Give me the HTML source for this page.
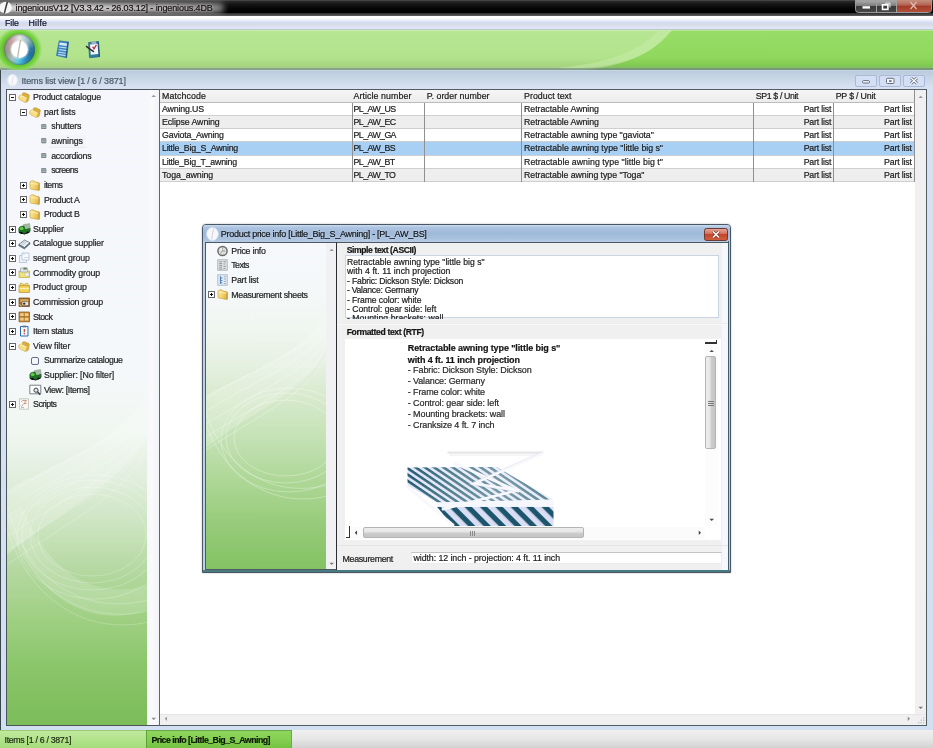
<!DOCTYPE html>
<html lang="en">
<head>
<meta charset="utf-8">
<title>ingeniousV12</title>
<style>
*{box-sizing:border-box;margin:0;padding:0}
html,body{width:933px;height:748px;overflow:hidden;background:#fff}
body{font-family:"Liberation Sans",sans-serif;font-size:9px;color:#1c1c1c;position:relative}
.abs{position:absolute}
.t{position:absolute;white-space:pre;line-height:12px;height:12px;color:#1c1c1c;-webkit-text-stroke:.2px currentColor;filter:blur(.25px)}
#titlebar{left:0;top:0;width:933px;height:16px;background:linear-gradient(#5a5a5a 0,#2c2c2c 1px,#161616 4px,#040404 9px,#000 13px,#3c3c3c 13.6px,#4a4a4a 15.4px,#9a9a9a 16px);overflow:hidden}
#titleglow{left:-14px;top:3px;width:238px;height:10px;border-radius:5px;background:linear-gradient(90deg,#f0f0f0 0,#dcdcdc 45%,#b4b4b4 78%,#888 100%);filter:blur(3.2px)}
#menubar{left:0;top:16px;width:933px;height:14px;background:linear-gradient(#ffffff 0,#fcfdfc 2px,#e8eef8 4.5px,#d2dcf4 6.5px,#d8dde2 9px,#e0e4fb 11.5px,#dfe3f6 12.6px,#b9c9c2 13.4px,#c4dcbc 14px)}
#toolbar{left:0;top:30px;width:933px;height:40px;overflow:hidden}
#mdi{left:0;top:70px;width:933px;height:660px;background:linear-gradient(#c8dce2 0,#bccbde 1.5px,#c6d6e5 8px,#d8e1f1 17px,#d6e2f3 20px,#d0e0f2 100%);border-left:1px solid #3c444c}
#tree{left:6px;top:89px;width:154px;height:637px;border:1px solid #4e545c;border-right:none;background:linear-gradient(#f5f7fc 0,#f5f8fa 45%,#f0f6f0 54%,#e0eedc 61.5%,#cce4c0 68.6%,#b4d8a0 75.8%,#a0d084 82.9%,#8cc66c 90.1%,#80be5e 97.2%,#7cbc5a 100%);overflow:hidden}
#treesb{left:147px;top:90px;width:12px;height:635px;background:linear-gradient(90deg,#f6f7fb 0,#fafafc 40%,#f3f4f8 100%)}
.pm{position:absolute;width:7px;height:7px;border:1px solid #686868;background:#fff}
.pm:before{content:"";position:absolute;left:1px;top:2px;width:3px;height:1px;background:#111}
.pm.p:after{content:"";position:absolute;left:2px;top:1px;width:1px;height:3px;background:#111}
.ic{position:absolute;width:12px;height:11px}
#grid{left:159px;top:89px;width:768px;height:637px;border:1px solid #555b63;border-left:1.5px solid #62666c;background:#fff;overflow:hidden}
.gh{position:absolute;top:0;height:13px;background:linear-gradient(#f6f6f6,#ececec);border-right:1px solid #8e8e8e;border-bottom:1px solid #bcbcbc}
.gr{position:absolute;left:0;width:755px;height:13.15px;border-bottom:1px solid #cfcfcf}
.gv{position:absolute;top:13px;width:1px;height:79px;background:#909090}
#statusbar{left:0;top:730px;width:933px;height:18px;background:linear-gradient(#f0f0f0 0,#e6e6e6 50%,#d2d2d2 100%)}
#dlg{left:202px;top:224.3px;width:529px;height:348.7px;border:1px solid #4a5866;border-radius:4px 4px 0 0;background:#b9cfe8;box-shadow:0 0 2px rgba(0,0,0,.3)}
</style>
</head>
<body>
<svg width="0" height="0" style="position:absolute"><defs><linearGradient id="fgrad" x1="0" y1="0" x2="1" y2=".4"><stop offset="0" stop-color="#faeaa6"/><stop offset=".55" stop-color="#f2d574"/><stop offset="1" stop-color="#e2b848"/></linearGradient></defs></svg>

<div id="titlebar" class="abs"></div><div id="titleglow" class="abs"></div>
<svg class="abs" style="left:0;top:0" width="16" height="15" viewBox="0 0 16 15"><ellipse cx="5.6" cy="7.7" rx="6.3" ry="5.9" fill="#f6f6f6"/><path d="M6.6 1.6L8.1 2L5 13.6L3.6 13.2Z" fill="#3a3a3a"/></svg>
<div class="t" style="left:15.5px;top:1.5px;font-size:9px;letter-spacing:-0.11px;color:#141414;text-shadow:0 0 3px rgba(255,255,255,.9),0 0 1px rgba(120,40,40,.5);">ingeniousV12 [V3.3.42 - 26.03.12] - ingenious.4DB</div>
<svg class="abs" style="left:855px;top:0" width="78" height="14" viewBox="0 0 78 14">
<defs><linearGradient id="wb" x1="0" y1="0" x2="0" y2="1"><stop offset="0" stop-color="#b0b0b0"/><stop offset=".44" stop-color="#7e7e7e"/><stop offset=".5" stop-color="#3a3a3a"/><stop offset="1" stop-color="#484848"/></linearGradient>
<linearGradient id="wc" x1="0" y1="0" x2="0" y2="1"><stop offset="0" stop-color="#c4907f"/><stop offset=".44" stop-color="#b46252"/><stop offset=".5" stop-color="#9e3a26"/><stop offset="1" stop-color="#b45038"/></linearGradient></defs>
<path d="M0.5 0V9.5Q0.5 12.5 3.5 12.5H73.5Q76.5 12.5 76.5 9.5V0Z" fill="url(#wb)" stroke="#9a9a9a" stroke-width="1"/>
<path d="M41.5 0V12H73.5Q76 12 76 9.5V0Z" fill="url(#wc)"/>
<path d="M21.5 0V12.5M41.5 0V12.5" stroke="#a0a0a0" stroke-width="1"/>
<rect x="7.5" y="6.2" width="7.5" height="2.4" fill="#fff"/>
<rect x="27.5" y="4.8" width="5.4" height="4.6" fill="none" stroke="#fff" stroke-width="1.6"/><path d="M30 3.2H35V7.5" fill="none" stroke="#e8e8e8" stroke-width="1"/>
<path d="M55.5 2L61.5 9M61.5 2L55.5 9" stroke="#e2b8ac" stroke-width="1.3"/>
</svg>
<div id="menubar" class="abs"></div>
<div class="t" style="left:5.0px;top:17.0px;font-size:8.8px;letter-spacing:-0.06px;color:#10102a;">File</div>
<div class="t" style="left:28.5px;top:17.0px;font-size:8.8px;letter-spacing:0.22px;color:#10102a;">Hilfe</div>
<div id="toolbar" class="abs">
<svg width="933" height="40" viewBox="0 0 933 40" style="position:absolute;left:0;top:0">
<defs>
<linearGradient id="tbL" x1="0" y1="0" x2="0" y2="1"><stop offset="0" stop-color="#d0ecc0"/><stop offset=".038" stop-color="#b7e693"/><stop offset=".7" stop-color="#b2e38c"/><stop offset=".9" stop-color="#a7d57f"/><stop offset=".94" stop-color="#a8cc90"/><stop offset=".972" stop-color="#7c9880"/><stop offset="1" stop-color="#8aa69a"/></linearGradient>
<linearGradient id="tbR" x1="0" y1="0" x2="0" y2="1"><stop offset="0" stop-color="#c0eca0"/><stop offset=".038" stop-color="#97dc67"/><stop offset=".7" stop-color="#8fd85d"/><stop offset=".9" stop-color="#80c850"/><stop offset=".94" stop-color="#88bc70"/><stop offset=".972" stop-color="#6a8c6c"/><stop offset="1" stop-color="#7f9c8e"/></linearGradient>
<radialGradient id="orbglow" cx=".5" cy=".5" r=".5"><stop offset=".6" stop-color="#58b828"/><stop offset=".74" stop-color="#6ccc36"/><stop offset=".86" stop-color="#86d850" stop-opacity=".9"/><stop offset="1" stop-color="#a8e07c" stop-opacity="0"/></radialGradient>
<linearGradient id="orbring" x1="0" y1="0" x2="1" y2="0"><stop offset="0" stop-color="#86867c"/><stop offset=".25" stop-color="#b08a84"/><stop offset=".5" stop-color="#c8d8dc"/><stop offset=".75" stop-color="#3a9ab8"/><stop offset="1" stop-color="#1f6f9c"/></linearGradient>
</defs>
<rect x="0" y="0" width="933" height="40" fill="url(#tbR)"/>
<path d="M0 0H672C660 14 640 35 583 40H0Z" fill="url(#tbL)"/>
<path d="M672 0.5C660 14 640 35 583 38H556C620 33 647 14 658 0.5Z" fill="#c8eeaa" opacity=".5"/>
<ellipse cx="19" cy="19.5" rx="24" ry="23" fill="url(#orbglow)"/>
<g transform="translate(56,10.2) scale(1,1.06)">
<path d="M3.2 0.6L12.6 1.6L10.6 16.6L0.5 14.4Z" fill="#3f84c0" stroke="#2f6aa0" stroke-width=".6"/><path d="M12.6 1.6L10.6 16.6L9.6 16.4L11.6 1.5Z" fill="#27566f"/>
<path d="M3.6 2.2L11 3L10.7 5.4L3.3 4.6Z" fill="#d8ecf8"/>
<path d="M3 6.4L10.4 7.3M2.7 8.8L10.1 9.8M2.4 11.2L9.8 12.3M2.1 13.4L9.5 14.6" stroke="#b9dcf4" stroke-width="1.1"/>
</g>
<g transform="translate(86,10.2) scale(1,1.06)">
<path d="M2.5 2.2L12.5 1.2L13.7 15.6L3.5 16.6Z" fill="#2f7aa4" stroke="#235f80" stroke-width=".6"/><path d="M12.5 1.2L13.7 15.6L12.7 15.7L11.6 1.3Z" fill="#1f4f6a"/>
<path d="M4 4L11.5 3.3L12.3 13L4.8 13.8Z" fill="#f4f8fb"/>
<path d="M5.5 1.5L10 1L10.3 3.6L5.8 4.1Z" fill="#9db4c4"/>
<path d="M6.6 6L8 8.2L10.4 4.4" stroke="#b8243c" stroke-width="1.2" fill="none"/>
<path d="M0 5.6L4 8.4L8 11" stroke="#33262e" stroke-width="1.5" fill="none"/>
</g>
</svg>
<div class="abs" style="left:4px;top:4px;width:31px;height:31px;border-radius:50%;background:conic-gradient(from 0deg,#e4ebe6 0,#9cbcc4 12%,#2a78a4 24%,#1f6fa0 32%,#2a90c0 42%,#5ccbe4 52%,#a4c4c0 60%,#9a9c92 72%,#b09a98 82%,#c8a4aa 89%,#e4ebe6 100%);box-shadow:inset 0 0 2px 1px rgba(60,90,60,.55)"></div>
<div class="abs" style="left:10.5px;top:10.5px;width:17px;height:17px;border-radius:50%;background:radial-gradient(circle,#fff 0,#fff 70%,#eef0ec 100%);box-shadow:0 0 2px 1px rgba(255,255,255,.55)"></div>
<svg class="abs" style="left:10px;top:8px" width="18" height="22" viewBox="0 0 18 22"><path d="M10 1.5L11.2 2L8 20.5L6.8 20Z" fill="#b8b8b2"/></svg>
</div>
<div id="mdi" class="abs"></div>
<svg class="abs" style="left:6px;top:73px" width="14" height="15" viewBox="0 0 14 15"><ellipse cx="6.5" cy="7.3" rx="4.8" ry="5.6" fill="#f9fafc" stroke="#e6ebf3" stroke-width="1.2"/><path d="M7 3L7.8 3.2L6.2 11.6L5.4 11.4Z" fill="#d8dbe0"/></svg>
<div class="t" style="left:21.5px;top:75.0px;font-size:9px;letter-spacing:-0.14px;color:#4c5a68;">Items list view [1 / 6 / 3871]</div>
<svg class="abs" style="left:854px;top:74px" width="74" height="14" viewBox="0 0 74 14">
<g fill="#d4dff5" stroke="#a9b9d6" stroke-width="1"><rect x="1.5" y="1.5" width="21" height="11" rx="1.5"/><rect x="25.5" y="1.5" width="21" height="11" rx="1.5"/><rect x="49.5" y="1.5" width="21" height="11" rx="1.5"/></g>
<rect x="8.5" y="6.6" width="7" height="2.4" rx="1" fill="#f4f7fc" stroke="#58626e" stroke-width=".9"/>
<rect x="32.5" y="4.3" width="7.5" height="5.2" rx="1" fill="#f4f7fc" stroke="#58626e" stroke-width=".9"/><rect x="35" y="6.3" width="2.6" height="1.5" fill="#58626e"/>
<path d="M57 4L63 9.6M63 4L57 9.6" stroke="#58626e" stroke-width="2.8"/><path d="M57 4L63 9.6M63 4L57 9.6" stroke="#fafcfe" stroke-width="1.4"/>
</svg>
<div id="tree" class="abs">
<svg width="141" height="340" viewBox="0 0 141 340" style="position:absolute;left:0;top:295px">
<g fill="none" stroke="#ffffff" stroke-opacity=".28" stroke-width=".8">
<path d="M141 20C110 60 60 70 0 110"/><path d="M141 28C112 70 62 82 0 124"/><path d="M141 36C114 80 64 94 0 138"/><path d="M141 44C116 90 66 106 0 152"/>
<path d="M141 52C118 100 68 118 0 166"/><path d="M141 60C120 110 70 130 0 180"/>
<ellipse cx="85" cy="150" rx="70" ry="55"/><ellipse cx="85" cy="150" rx="62" ry="48"/><ellipse cx="85" cy="150" rx="54" ry="41"/><ellipse cx="88" cy="152" rx="78" ry="62"/>
<path d="M0 120C20 200 80 230 141 215"/><path d="M0 132C22 210 82 240 141 226"/><path d="M0 144C24 220 84 250 141 237"/>
</g>
<path d="M141 10C105 60 55 75 0 105V170C60 120 115 100 141 50Z" fill="#fff" opacity=".22"/>
<path d="M0 130C25 215 85 245 141 225V200C90 215 40 190 15 120Z" fill="#fff" opacity=".15"/>
</svg>
</div>
<div id="treesb" class="abs"></div>
<svg class="abs" style="left:150.8px;top:93.6px" width="5.4" height="3.8" viewBox="0 0 7 5"><path d="M0.5 4L3.5 1L6.5 4Z" fill="#9a9a9a"/></svg>
<svg class="abs" style="left:150.8px;top:716.6px" width="5.4" height="3.8" viewBox="0 0 7 5"><path d="M0.5 1L3.5 4L6.5 1Z" fill="#8a8a8a"/></svg>
<div class="pm" style="left:9px;top:94px"></div>
<svg class="abs" style="left:18px;top:92.0px" width="12" height="11" viewBox="0 0 12 11"><path d="M4.2 1.6Q5.4 0.2 7.2 0.9L10.8 2.6Q11.5 3 11.3 3.8L10.4 8.6Q10.2 9.6 9.2 9.8L7 10.3Z" fill="#dcae3c" stroke="#b98a24" stroke-width=".5"/><path d="M0.7 4.4Q1.8 2.4 4 3.2L8.6 5.2Q9.4 5.6 9.1 6.4L7.8 9.8Q7.4 10.6 6.6 10.2L1.8 7.8Q0.2 6.8 0.7 4.4Z" fill="#f6df86" stroke="#c9a040" stroke-width=".5"/><path d="M2 4.4Q3 3.6 4.2 4.2L7.6 5.8" stroke="#fdf3c0" stroke-width=".8" fill="none"/></svg>
<div class="t" style="left:33.0px;top:91.2px;font-size:8.8px;letter-spacing:-0.18px;color:#222;">Product catalogue</div>
<div class="pm" style="left:20px;top:109px"></div>
<svg class="abs" style="left:29.2px;top:106.6px" width="12" height="11" viewBox="0 0 12 11"><path d="M4.2 1.6Q5.4 0.2 7.2 0.9L10.8 2.6Q11.5 3 11.3 3.8L10.4 8.6Q10.2 9.6 9.2 9.8L7 10.3Z" fill="#dcae3c" stroke="#b98a24" stroke-width=".5"/><path d="M0.7 4.4Q1.8 2.4 4 3.2L8.6 5.2Q9.4 5.6 9.1 6.4L7.8 9.8Q7.4 10.6 6.6 10.2L1.8 7.8Q0.2 6.8 0.7 4.4Z" fill="#f6df86" stroke="#c9a040" stroke-width=".5"/><path d="M2 4.4Q3 3.6 4.2 4.2L7.6 5.8" stroke="#fdf3c0" stroke-width=".8" fill="none"/></svg>
<div class="t" style="left:44.0px;top:105.8px;font-size:8.8px;letter-spacing:-0.13px;color:#222;">part lists</div>
<svg class="abs" style="left:41.3px;top:123.6px" width="5.4" height="5.4" viewBox="0 0 6 6"><rect x=".4" y=".4" width="5.2" height="5.2" rx=".8" fill="#7f8d90" stroke="#6a787c" stroke-width=".6"/><path d="M.6 2.1H5.4M.6 3.9H5.4" stroke="#b9c6c8" stroke-width=".8"/></svg>
<div class="t" style="left:51.2px;top:120.4px;font-size:8.8px;letter-spacing:-0.17px;color:#222;">shutters</div>
<div class="abs" style="left:49px;top:134.8px;width:37px;height:13px;background:#f2f4f8;border-bottom:1px solid #e9ebf0"></div>
<svg class="abs" style="left:41.3px;top:138.3px" width="5.4" height="5.4" viewBox="0 0 6 6"><rect x=".4" y=".4" width="5.2" height="5.2" rx=".8" fill="#7f8d90" stroke="#6a787c" stroke-width=".6"/><path d="M.6 2.1H5.4M.6 3.9H5.4" stroke="#b9c6c8" stroke-width=".8"/></svg>
<div class="t" style="left:51.2px;top:135.1px;font-size:8.8px;letter-spacing:-0.08px;color:#222;">awnings</div>
<svg class="abs" style="left:41.3px;top:152.9px" width="5.4" height="5.4" viewBox="0 0 6 6"><rect x=".4" y=".4" width="5.2" height="5.2" rx=".8" fill="#7f8d90" stroke="#6a787c" stroke-width=".6"/><path d="M.6 2.1H5.4M.6 3.9H5.4" stroke="#b9c6c8" stroke-width=".8"/></svg>
<div class="t" style="left:51.2px;top:149.7px;font-size:8.8px;letter-spacing:-0.24px;color:#222;">accordions</div>
<svg class="abs" style="left:41.3px;top:167.5px" width="5.4" height="5.4" viewBox="0 0 6 6"><rect x=".4" y=".4" width="5.2" height="5.2" rx=".8" fill="#7f8d90" stroke="#6a787c" stroke-width=".6"/><path d="M.6 2.1H5.4M.6 3.9H5.4" stroke="#b9c6c8" stroke-width=".8"/></svg>
<div class="t" style="left:51.2px;top:164.3px;font-size:8.8px;letter-spacing:-0.59px;color:#222;">screens</div>
<div class="pm p" style="left:20px;top:182px"></div>
<svg class="abs" style="left:29.2px;top:179.7px" width="12" height="11" viewBox="0 0 12 11"><path d="M1 2.4Q1 1.2 2.2 1L4.6 0.8Q5.4 0.8 5.8 1.5L6.2 2.1L9.4 2.5Q10.5 2.7 10.5 3.8V9.6Q10.5 10.7 9.4 10.4L1.9 9.1Q1 8.9 1 8Z" fill="url(#fgrad)" stroke="#c79a36" stroke-width=".6"/><path d="M9.6 3L10.3 3.6V10.2L9.6 10.3Z" fill="#b88a28"/><path d="M1.6 3.4L9.4 4.2" stroke="#fdf4c4" stroke-width=".7"/></svg>
<div class="t" style="left:44.0px;top:178.9px;font-size:8.8px;letter-spacing:-0.53px;color:#222;">items</div>
<div class="pm p" style="left:20px;top:196px"></div>
<svg class="abs" style="left:29.2px;top:194.3px" width="12" height="11" viewBox="0 0 12 11"><path d="M1 2.4Q1 1.2 2.2 1L4.6 0.8Q5.4 0.8 5.8 1.5L6.2 2.1L9.4 2.5Q10.5 2.7 10.5 3.8V9.6Q10.5 10.7 9.4 10.4L1.9 9.1Q1 8.9 1 8Z" fill="url(#fgrad)" stroke="#c79a36" stroke-width=".6"/><path d="M9.6 3L10.3 3.6V10.2L9.6 10.3Z" fill="#b88a28"/><path d="M1.6 3.4L9.4 4.2" stroke="#fdf4c4" stroke-width=".7"/></svg>
<div class="t" style="left:44.0px;top:193.5px;font-size:8.8px;letter-spacing:-0.28px;color:#222;">Product A</div>
<div class="pm p" style="left:20px;top:211px"></div>
<svg class="abs" style="left:29.2px;top:209.0px" width="12" height="11" viewBox="0 0 12 11"><path d="M1 2.4Q1 1.2 2.2 1L4.6 0.8Q5.4 0.8 5.8 1.5L6.2 2.1L9.4 2.5Q10.5 2.7 10.5 3.8V9.6Q10.5 10.7 9.4 10.4L1.9 9.1Q1 8.9 1 8Z" fill="url(#fgrad)" stroke="#c79a36" stroke-width=".6"/><path d="M9.6 3L10.3 3.6V10.2L9.6 10.3Z" fill="#b88a28"/><path d="M1.6 3.4L9.4 4.2" stroke="#fdf4c4" stroke-width=".7"/></svg>
<div class="t" style="left:44.0px;top:208.2px;font-size:8.8px;letter-spacing:-0.34px;color:#222;">Product B</div>
<div class="pm p" style="left:9px;top:226px"></div>
<svg class="abs" style="left:17.8px;top:223.0px" width="13" height="12" viewBox="0 0 13 12"><path d="M5.4 1.6L11.6 0.6L12.2 5.6L6.4 7.2Z" fill="#a3bba2" stroke="#6f8a70" stroke-width=".4"/><path d="M0.8 5.4Q1.4 3.4 3.6 3.2L6 3L7 6.6L12.2 5.4V8.2L6.6 10.8L1.2 9.6Q0.6 9.4 0.8 8.4Z" fill="#1f7424" stroke="#134a16" stroke-width=".5"/><ellipse cx="3.6" cy="5.6" rx="2" ry="1.5" fill="#5fd03e"/><path d="M1 9L6.4 10.6L12 8.2V9.2L6.6 11.6L1 10Z" fill="#101810"/><ellipse cx="3.4" cy="9.8" rx="1.3" ry="1.1" fill="#0c0c0c"/><ellipse cx="9.4" cy="9.4" rx="1.1" ry="1" fill="#0c0c0c"/></svg>
<div class="t" style="left:33.0px;top:222.8px;font-size:8.8px;letter-spacing:-0.20px;color:#222;">Supplier</div>
<div class="pm p" style="left:9px;top:240px"></div>
<svg class="abs" style="left:17.8px;top:237.6px" width="13" height="12" viewBox="0 0 13 12"><path d="M0.8 6.5L6.5 2L12 4.8L6.4 9.6Z" fill="#e9eef4" stroke="#55606c" stroke-width=".7"/><path d="M0.8 6.5L6.4 9.6L12 4.8V6L6.4 11L0.8 7.8Z" fill="#6f8296" stroke="#44505c" stroke-width=".5"/><path d="M3 6.4L7 3.2M4.6 7.2L8.6 4" stroke="#8a96a4" stroke-width=".5"/></svg>
<div class="t" style="left:33.0px;top:237.4px;font-size:8.8px;letter-spacing:-0.14px;color:#222;">Catalogue supplier</div>
<div class="pm p" style="left:9px;top:255px"></div>
<svg class="abs" style="left:17.8px;top:252.2px" width="13" height="12" viewBox="0 0 13 12"><path d="M1.5 3.5H8.5V10.5H1.5Z" fill="#eef3fa" stroke="#a9b8cc" stroke-width=".7"/><path d="M4 1H11V8H4Z" fill="#f6f9fd" stroke="#a9b8cc" stroke-width=".7"/><path d="M6 0.8V3M6 5.5H11" stroke="#b9c6d8" stroke-width=".6"/></svg>
<div class="t" style="left:33.0px;top:252.0px;font-size:8.8px;letter-spacing:-0.14px;color:#222;">segment group</div>
<div class="pm p" style="left:9px;top:269px"></div>
<svg class="abs" style="left:17.8px;top:266.8px" width="13" height="12" viewBox="0 0 13 12"><path d="M1 4H11.5V10.5H1Z" fill="#f1e27a" stroke="#b9a640" stroke-width=".7"/><path d="M2.5 1H9.5V5H2.5Z" fill="#dfe6ee" stroke="#8a97a6" stroke-width=".6"/><path d="M5.5 0.6L8.5 0.6L9 2.5L5.4 2.8Z" fill="#6a8a5a"/><path d="M7 6H11V9H7Z" fill="#f4f6f9" stroke="#a9b4c0" stroke-width=".5"/></svg>
<div class="t" style="left:33.0px;top:266.6px;font-size:8.8px;letter-spacing:-0.16px;color:#222;">Commodity group</div>
<div class="pm p" style="left:9px;top:284px"></div>
<svg class="abs" style="left:17.8px;top:281.5px" width="13" height="12" viewBox="0 0 13 12"><path d="M1 3.5H11.5V10.5H1Z" fill="#f2cf52" stroke="#b8902e" stroke-width=".7"/><path d="M2.5 1L6 2.4L9.5 1L10.5 3.6H1.8Z" fill="#f7de7c" stroke="#b8902e" stroke-width=".6"/><path d="M1.5 6.5H11" stroke="#fbeeb0" stroke-width="1.4"/></svg>
<div class="t" style="left:33.0px;top:281.3px;font-size:8.8px;letter-spacing:-0.11px;color:#222;">Product group</div>
<div class="pm p" style="left:9px;top:299px"></div>
<svg class="abs" style="left:17.8px;top:296.1px" width="13" height="12" viewBox="0 0 13 12"><path d="M1 2H11.5V10.5H1Z" fill="#a8702c" stroke="#6a4416" stroke-width=".7"/><path d="M2.2 3.2H10.3V6H2.2Z" fill="#d9a85a"/><path d="M4 5.5H10.5V9.6H4Z" fill="#e8e2d2" stroke="#5a4630" stroke-width=".5"/><circle cx="6.2" cy="7.6" r="1.2" fill="#333"/><path d="M1.4 8.4L3.6 10.2" stroke="#e9c36a" stroke-width="1"/></svg>
<div class="t" style="left:33.0px;top:295.9px;font-size:8.8px;letter-spacing:-0.21px;color:#222;">Commission group</div>
<div class="pm p" style="left:9px;top:313px"></div>
<svg class="abs" style="left:17.8px;top:310.7px" width="13" height="12" viewBox="0 0 13 12"><path d="M1 1H11.5V10.8H1Z" fill="#c98a3c" stroke="#7e5218" stroke-width=".7"/><path d="M2.2 2.2H5.6V5.2H2.2ZM7 2.2H10.4V5.2H7ZM2.2 6.6H5.6V9.6H2.2ZM7 6.6H10.4V9.6H7Z" fill="#f0cf86"/><path d="M1 5.9H11.5" stroke="#7e5218" stroke-width=".6"/></svg>
<div class="t" style="left:33.0px;top:310.5px;font-size:8.8px;letter-spacing:-0.55px;color:#222;">Stock</div>
<div class="pm p" style="left:9px;top:328px"></div>
<svg class="abs" style="left:17.8px;top:325.3px" width="13" height="12" viewBox="0 0 13 12"><path d="M2.5 1.5H10V11H2.5Z" fill="#f7fafd" stroke="#2a6cb4" stroke-width="1"/><path d="M4.6 0.6H8V2.4H4.6Z" fill="#6a7684"/><path d="M6.3 4V7.2" stroke="#c43a2a" stroke-width="1.2"/><circle cx="6.3" cy="8.8" r=".7" fill="#c43a2a"/></svg>
<div class="t" style="left:33.0px;top:325.1px;font-size:8.8px;letter-spacing:-0.27px;color:#222;">Item status</div>
<div class="pm" style="left:9px;top:343px"></div>
<svg class="abs" style="left:18px;top:340.5px" width="12" height="11" viewBox="0 0 12 11"><path d="M4.2 1.6Q5.4 0.2 7.2 0.9L10.8 2.6Q11.5 3 11.3 3.8L10.4 8.6Q10.2 9.6 9.2 9.8L7 10.3Z" fill="#dcae3c" stroke="#b98a24" stroke-width=".5"/><path d="M0.7 4.4Q1.8 2.4 4 3.2L8.6 5.2Q9.4 5.6 9.1 6.4L7.8 9.8Q7.4 10.6 6.6 10.2L1.8 7.8Q0.2 6.8 0.7 4.4Z" fill="#f6df86" stroke="#c9a040" stroke-width=".5"/><path d="M2 4.4Q3 3.6 4.2 4.2L7.6 5.8" stroke="#fdf3c0" stroke-width=".8" fill="none"/></svg>
<div class="t" style="left:33.0px;top:339.7px;font-size:8.8px;letter-spacing:-0.06px;color:#222;">View filter</div>
<div class="abs" style="left:31.3px;top:357.3px;width:7.6px;height:7.6px;border:1.3px solid #626e86;border-radius:2px;background:#f4f6fa"></div>
<div class="t" style="left:44.0px;top:354.4px;font-size:8.8px;letter-spacing:-0.34px;color:#222;">Summarize catalogue</div>
<svg class="abs" style="left:28.8px;top:369.2px" width="13" height="12" viewBox="0 0 13 12"><path d="M5.4 1.6L11.6 0.6L12.2 5.6L6.4 7.2Z" fill="#a3bba2" stroke="#6f8a70" stroke-width=".4"/><path d="M0.8 5.4Q1.4 3.4 3.6 3.2L6 3L7 6.6L12.2 5.4V8.2L6.6 10.8L1.2 9.6Q0.6 9.4 0.8 8.4Z" fill="#1f7424" stroke="#134a16" stroke-width=".5"/><ellipse cx="3.6" cy="5.6" rx="2" ry="1.5" fill="#5fd03e"/><path d="M1 9L6.4 10.6L12 8.2V9.2L6.6 11.6L1 10Z" fill="#101810"/><ellipse cx="3.4" cy="9.8" rx="1.3" ry="1.1" fill="#0c0c0c"/><ellipse cx="9.4" cy="9.4" rx="1.1" ry="1" fill="#0c0c0c"/></svg>
<div class="t" style="left:44.0px;top:369.0px;font-size:8.8px;letter-spacing:-0.11px;color:#222;">Supplier: [No filter]</div>
<svg class="abs" style="left:28.8px;top:383.8px" width="13" height="12" viewBox="0 0 13 12"><path d="M0.8 1.2H11.8V9.8H0.8Z" fill="#fcfdfe" stroke="#6c747c" stroke-width=".9"/><circle cx="7" cy="6.2" r="2.1" fill="#e4e8ee" stroke="#3c444c" stroke-width="1"/><path d="M8.6 7.8L11.2 10.8" stroke="#3c444c" stroke-width="1.5"/></svg>
<div class="t" style="left:44.0px;top:383.6px;font-size:8.8px;letter-spacing:-0.35px;color:#222;">View: [Items]</div>
<div class="pm p" style="left:9px;top:401px"></div>
<svg class="abs" style="left:17.8px;top:398.4px" width="13" height="12" viewBox="0 0 13 12"><path d="M1.5 0.8H10.5V11.2H1.5Z" fill="#f8f8f6" stroke="#b4b4ae" stroke-width=".7"/><path d="M4.4 2.6H8.4L5.8 5.6H8.6M3.4 8.6L5.2 6.4" stroke="#b86a4a" stroke-width=".7" fill="none"/><path d="M3 3.4H4M3 9.6H6" stroke="#8a8a84" stroke-width=".6"/></svg>
<div class="t" style="left:33.0px;top:398.2px;font-size:8.8px;letter-spacing:-0.48px;color:#222;">Scripts</div>
<div id="grid" class="abs">
<div class="gh" style="left:0px;width:193px"></div>
<div class="gh" style="left:192px;width:73px"></div>
<div class="gh" style="left:264px;width:98px"></div>
<div class="gh" style="left:361px;width:233px"></div>
<div class="gh" style="left:593px;width:81px"></div>
<div class="gh" style="left:673px;width:82px"></div>
<div class="gh" style="left:755px;width:11px;border-right:none;background:#f0f0f0;border-bottom:none"></div>
<div class="gr" style="top:13.00px;background:#fff"></div>
<div class="gr" style="top:26.15px;background:#eeeeee"></div>
<div class="gr" style="top:39.30px;background:#fff"></div>
<div class="gr" style="top:52.45px;background:#a8d0f4"></div>
<div class="gr" style="top:65.60px;background:#fff"></div>
<div class="gr" style="top:78.75px;background:#eeeeee"></div>
<div class="gv" style="left:192px"></div>
<div class="gv" style="left:264px"></div>
<div class="gv" style="left:361px"></div>
<div class="gv" style="left:593px"></div>
<div class="gv" style="left:673px"></div>
<div class="gv" style="left:754px"></div>
<div class="abs" style="left:755px;top:0;width:11px;height:635px;background:#f0f0f0"></div>
<div class="abs" style="left:0;top:624px;width:766px;height:11px;background:#f0f0f0;border-top:1px solid #e6e6e6"></div>
<svg class="abs" style="left:757.8px;top:4.6px" width="5.4" height="3.8" viewBox="0 0 7 5"><path d="M0.5 4L3.5 1L6.5 4Z" fill="#9a9a9a"/></svg>
<svg class="abs" style="left:757.8px;top:615.6px" width="5.4" height="3.8" viewBox="0 0 7 5"><path d="M0.5 1L3.5 4L6.5 1Z" fill="#7a7a7a"/></svg>
<svg class="abs" style="left:3.6px;top:626.2px" width="3.8" height="5.4" viewBox="0 0 5 7"><path d="M4 0.5L1 3.5L4 6.5Z" fill="#9a9a9a"/></svg>
<svg class="abs" style="left:746.6px;top:626.2px" width="3.8" height="5.4" viewBox="0 0 5 7"><path d="M1 0.5L4 3.5L1 6.5Z" fill="#8a8a8a"/></svg>
<svg class="abs" style="left:756px;top:625px" width="10" height="10" viewBox="0 0 10 10"><g fill="#c2c2c2"><rect x="7" y="2" width="1.4" height="1.4"/><rect x="4.5" y="4.5" width="1.4" height="1.4"/><rect x="7" y="4.5" width="1.4" height="1.4"/><rect x="2" y="7" width="1.4" height="1.4"/><rect x="4.5" y="7" width="1.4" height="1.4"/><rect x="7" y="7" width="1.4" height="1.4"/></g></svg>
</div>
<div class="t" style="left:162.0px;top:90.4px;font-size:8.8px;letter-spacing:0.10px;color:#1a1a1a;">Matchcode</div>
<div class="t" style="left:353.6px;top:90.4px;font-size:8.8px;letter-spacing:0.08px;color:#1a1a1a;">Article number</div>
<div class="t" style="left:426.8px;top:90.4px;font-size:8.8px;letter-spacing:0.02px;color:#1a1a1a;">P. order number</div>
<div class="t" style="left:524.0px;top:90.4px;font-size:8.8px;letter-spacing:0.05px;color:#1a1a1a;">Product text</div>
<div class="t" style="left:755.7px;top:90.4px;font-size:8.8px;letter-spacing:-0.37px;color:#1a1a1a;">SP1 $ / Unit</div>
<div class="t" style="left:835.7px;top:90.4px;font-size:8.8px;letter-spacing:-0.19px;color:#1a1a1a;">PP $ / Unit</div>
<div class="t" style="left:162.0px;top:103.0px;font-size:8.8px;letter-spacing:-0.17px;color:#1a1a1a;">Awning.US</div>
<div class="t" style="left:353.6px;top:103.0px;font-size:8.8px;letter-spacing:-0.60px;color:#1a1a1a;">PL_AW_US</div>
<div class="t" style="left:524.0px;top:103.0px;font-size:8.8px;letter-spacing:-0.04px;color:#1a1a1a;">Retractable Awning</div>
<div class="t" style="left:803.7px;top:103.0px;font-size:8.8px;letter-spacing:-0.19px;color:#1a1a1a;">Part list</div>
<div class="t" style="left:884.0px;top:103.0px;font-size:8.8px;letter-spacing:-0.17px;color:#1a1a1a;">Part list</div>
<div class="t" style="left:162.0px;top:116.1px;font-size:8.8px;letter-spacing:-0.10px;color:#1a1a1a;">Eclipse Awning</div>
<div class="t" style="left:353.6px;top:116.1px;font-size:8.8px;letter-spacing:-0.60px;color:#1a1a1a;">PL_AW_EC</div>
<div class="t" style="left:524.0px;top:116.1px;font-size:8.8px;letter-spacing:-0.04px;color:#1a1a1a;">Retractable Awning</div>
<div class="t" style="left:803.7px;top:116.1px;font-size:8.8px;letter-spacing:-0.19px;color:#1a1a1a;">Part list</div>
<div class="t" style="left:884.0px;top:116.1px;font-size:8.8px;letter-spacing:-0.17px;color:#1a1a1a;">Part list</div>
<div class="t" style="left:162.0px;top:129.3px;font-size:8.8px;letter-spacing:-0.15px;color:#1a1a1a;">Gaviota_Awning</div>
<div class="t" style="left:353.6px;top:129.3px;font-size:8.8px;letter-spacing:-0.60px;color:#1a1a1a;">PL_AW_GA</div>
<div class="t" style="left:524.0px;top:129.3px;font-size:8.8px;letter-spacing:-0.05px;color:#1a1a1a;">Retractable awning type "gaviota"</div>
<div class="t" style="left:803.7px;top:129.3px;font-size:8.8px;letter-spacing:-0.19px;color:#1a1a1a;">Part list</div>
<div class="t" style="left:884.0px;top:129.3px;font-size:8.8px;letter-spacing:-0.17px;color:#1a1a1a;">Part list</div>
<div class="t" style="left:162.0px;top:142.4px;font-size:8.8px;letter-spacing:-0.24px;color:#1a1a1a;">Little_Big_S_Awning</div>
<div class="t" style="left:353.6px;top:142.4px;font-size:8.8px;letter-spacing:-0.60px;color:#1a1a1a;">PL_AW_BS</div>
<div class="t" style="left:524.0px;top:142.4px;font-size:8.8px;letter-spacing:-0.02px;color:#1a1a1a;">Retractable awning type "little big s"</div>
<div class="t" style="left:803.7px;top:142.4px;font-size:8.8px;letter-spacing:-0.19px;color:#1a1a1a;">Part list</div>
<div class="t" style="left:884.0px;top:142.4px;font-size:8.8px;letter-spacing:-0.17px;color:#1a1a1a;">Part list</div>
<div class="t" style="left:162.0px;top:155.5px;font-size:8.8px;letter-spacing:-0.23px;color:#1a1a1a;">Little_Big_T_awning</div>
<div class="t" style="left:353.6px;top:155.5px;font-size:8.8px;letter-spacing:-0.60px;color:#1a1a1a;">PL_AW_BT</div>
<div class="t" style="left:524.0px;top:155.5px;font-size:8.8px;letter-spacing:0.03px;color:#1a1a1a;">Retractable awning type "little big t"</div>
<div class="t" style="left:803.7px;top:155.5px;font-size:8.8px;letter-spacing:-0.19px;color:#1a1a1a;">Part list</div>
<div class="t" style="left:884.0px;top:155.5px;font-size:8.8px;letter-spacing:-0.17px;color:#1a1a1a;">Part list</div>
<div class="t" style="left:162.0px;top:168.7px;font-size:8.8px;letter-spacing:-0.06px;color:#1a1a1a;">Toga_awning</div>
<div class="t" style="left:353.6px;top:168.7px;font-size:8.8px;letter-spacing:-0.60px;color:#1a1a1a;">PL_AW_TO</div>
<div class="t" style="left:524.0px;top:168.7px;font-size:8.8px;letter-spacing:-0.06px;color:#1a1a1a;">Retractable awning type "Toga"</div>
<div class="t" style="left:803.7px;top:168.7px;font-size:8.8px;letter-spacing:-0.19px;color:#1a1a1a;">Part list</div>
<div class="t" style="left:884.0px;top:168.7px;font-size:8.8px;letter-spacing:-0.17px;color:#1a1a1a;">Part list</div>
<div id="statusbar" class="abs"></div>
<div class="abs" style="left:0;top:730px;width:146px;height:18px;background:linear-gradient(#bfe89c 0,#b3e38c 50%,#a6dc7c 100%);border-top:1px solid #9ac97a"></div>
<div class="abs" style="left:146px;top:730px;width:145.5px;height:18px;background:linear-gradient(#8fd65e 0,#84cf52 50%,#74c242 100%);border-left:1px solid #5fa038;border-right:1px solid #6aa848;border-top:1px solid #6aa848"></div>
<div class="t" style="left:4.5px;top:733.5px;font-size:8.8px;letter-spacing:-0.31px;color:#1c2a14;">Items [1 / 6 / 3871]</div>
<div class="t" style="left:151.5px;top:733.5px;font-size:8.8px;letter-spacing:-0.54px;font-weight:700;color:#0c1a06;">Price info [Little_Big_S_Awning]</div>
<div id="dlg" class="abs">
<div class="abs" style="left:0;top:0;width:527px;height:17px;border-radius:3px 3px 0 0;background:linear-gradient(#cddcee 0,#adc4e1 15%,#9fb9da 50%,#a6bfdd 75%,#b8cce4 100%)"></div>
<div class="abs" style="left:0;top:17px;width:527px;height:329px;background:#bcd0e9"></div>
<div class="abs" style="left:525.2px;top:16px;width:1px;height:330.7px;background:#3f5f6e"></div><div class="abs" style="left:526.1px;top:16px;width:1px;height:330.7px;background:#a9cfe4"></div>
<div class="abs" style="left:0;top:344.6px;width:527px;height:2.2px;background:#487a82"></div>
<div class="abs" style="left:2px;top:17px;width:131px;height:328px;border:1px solid #4c5a64;border-right:none;background:linear-gradient(#f6f8fc 0,#f5f8f9 14%,#f0f6f0 26.5%,#e4f0e0 38%,#d4e8c8 50%,#c0e0b0 62%,#acd694 74%,#98cc7c 85%,#88c468 97%,#84c264 100%);overflow:hidden">
<svg width="121" height="250" viewBox="0 0 121 250" style="position:absolute;left:0;top:70px">
<g fill="none" stroke="#ffffff" stroke-opacity=".3" stroke-width="1">
<path d="M121 10C95 40 50 55 0 85"/><path d="M121 18C97 50 52 66 0 98"/><path d="M121 26C99 60 54 77 0 111"/><path d="M121 34C101 70 56 88 0 124"/><path d="M121 42C103 80 58 99 0 137"/>
<ellipse cx="80" cy="125" rx="60" ry="45"/><ellipse cx="80" cy="125" rx="52" ry="38"/><ellipse cx="83" cy="127" rx="68" ry="52"/>
<path d="M0 100C20 160 70 185 121 172"/><path d="M0 112C22 170 72 195 121 183"/>
</g>
<path d="M121 0C90 45 45 58 0 82V135C50 95 100 80 121 35Z" fill="#fff" opacity=".2"/>
</svg>
<div class="abs" style="left:120px;top:0;width:11px;height:326px;background:#f1f1f3"></div>
<svg class="abs" style="left:122.8px;top:4.6px" width="5.4" height="3.8" viewBox="0 0 7 5"><path d="M0.5 4L3.5 1L6.5 4Z" fill="#9a9a9a"/></svg>
<svg class="abs" style="left:122.8px;top:318.6px" width="5.4" height="3.8" viewBox="0 0 7 5"><path d="M0.5 1L3.5 4L6.5 1Z" fill="#7a7a7a"/></svg>
</div>
<div class="abs" style="left:133px;top:17px;width:392px;height:327.6px;background:#f0f0f0;border-top:1px solid #4c5862;border-left:1.4px solid #2a2e32"></div>
<div class="abs" style="left:518.6px;top:18px;width:6.6px;height:326.6px;background:#f4f7fb"></div>
<div class="abs" style="left:142px;top:30.2px;width:374px;height:63px;background:#fff;border:1px solid #c9d6e2"></div>
<div class="abs" style="left:142px;top:114px;width:376px;height:201px;background:#fff"></div>
<div class="abs" style="left:134px;top:98px;width:391px;height:1px;background:#ececec"></div><div class="abs" style="left:134px;top:99px;width:391px;height:1px;background:#f8f8f8"></div>
<div class="abs" style="left:134px;top:320px;width:391px;height:1px;background:#e4e4e4"></div>
<div class="abs" style="left:208px;top:327px;width:311px;height:12px;background:#fff;border:1px solid #ececec;border-top-color:#c4c4c4"></div>
</div>
<svg class="abs" style="left:206px;top:227px" width="13" height="14" viewBox="0 0 13 14"><ellipse cx="6.5" cy="7" rx="5.8" ry="6.4" fill="#f6f8fb" stroke="#dfe7f0" stroke-width=".8"/><path d="M7.1 1.4L8.1 1.7L6.1 12.6L5.1 12.3Z" fill="#cfd4da"/></svg>
<div class="t" style="left:220.8px;top:227.9px;font-size:9px;letter-spacing:-0.27px;color:#101418;text-shadow:0 0 3px rgba(255,255,255,.7);">Product price info [Little_Big_S_Awning] - [PL_AW_BS]</div>
<svg class="abs" style="left:704px;top:228px" width="24" height="13" viewBox="0 0 24 13">
<defs><linearGradient id="dc" x1="0" y1="0" x2="0" y2="1"><stop offset="0" stop-color="#e6a89c"/><stop offset=".45" stop-color="#d4705c"/><stop offset=".5" stop-color="#c4452c"/><stop offset="1" stop-color="#d0603e"/></linearGradient></defs>
<rect x=".5" y=".5" width="23" height="12" rx="2" fill="url(#dc)" stroke="#6a3a34" stroke-width="1"/>
<path d="M9 3.5L15 9.5M15 3.5L9 9.5" stroke="#7a3a30" stroke-width="3"/><path d="M9 3.5L15 9.5M15 3.5L9 9.5" stroke="#fff" stroke-width="1.5"/>
</svg>
<svg class="abs" style="left:216.8px;top:244.6px" width="11" height="12" viewBox="0 0 11 12"><circle cx="5.5" cy="6" r="4.6" fill="#dededc" stroke="#6c6c6a" stroke-width="1.5"/><path d="M5.5 2.6V6H8M5.5 6L3.4 8" stroke="#8e8e8a" stroke-width=".9" fill="none"/><circle cx="4.2" cy="4.4" r="1.4" fill="#f4f4f2" opacity=".7"/></svg>
<div class="t" style="left:231.3px;top:244.6px;font-size:8.8px;letter-spacing:-0.22px;color:#222;">Price info</div>
<svg class="abs" style="left:216.8px;top:259.4px" width="11" height="12" viewBox="0 0 11 12"><rect x=".8" y=".8" width="9.4" height="10.4" fill="#e4e6e8" stroke="#a0a6ac" stroke-width=".8"/><path d="M2.2 2.8H5.2M2.2 4.6H5.2M2.2 6.4H5.2M2.2 8.2H5.2M2.2 10H5.2M6.4 2.8H9M6.4 5H8.4M6.4 7.4H9M6.4 9.6H8.4" stroke="#858c92" stroke-width=".9"/></svg>
<div class="t" style="left:231.3px;top:259.4px;font-size:8.8px;letter-spacing:-0.60px;color:#222;">Texts</div>
<svg class="abs" style="left:216.8px;top:274.2px" width="11" height="12" viewBox="0 0 11 12"><rect x=".8" y=".8" width="9.4" height="10.4" fill="#e6eef8" stroke="#9aaec4" stroke-width=".8"/><path d="M3.4 2.2V9.8M3.4 4H5.4M3.4 6.4H5.4M3.4 8.8H5.4" stroke="#3f78b8" stroke-width="1"/><path d="M6.8 2.8H9M6.8 5H9M6.8 7.4H9M6.8 9.6H9" stroke="#9aa4ae" stroke-width=".9"/></svg>
<div class="t" style="left:231.3px;top:274.2px;font-size:8.8px;letter-spacing:-0.24px;color:#222;">Part list</div>
<div class="pm p" style="left:207.5px;top:291px"></div>
<svg class="abs" style="left:216.6px;top:288.6px" width="12" height="11" viewBox="0 0 12 11"><path d="M1 2.4Q1 1.2 2.2 1L4.6 0.8Q5.4 0.8 5.8 1.5L6.2 2.1L9.4 2.5Q10.5 2.7 10.5 3.8V9.6Q10.5 10.7 9.4 10.4L1.9 9.1Q1 8.9 1 8Z" fill="url(#fgrad)" stroke="#c79a36" stroke-width=".6"/><path d="M9.6 3L10.3 3.6V10.2L9.6 10.3Z" fill="#b88a28"/><path d="M1.6 3.4L9.4 4.2" stroke="#fdf4c4" stroke-width=".7"/></svg>
<div class="t" style="left:231.3px;top:289.0px;font-size:8.8px;letter-spacing:-0.32px;color:#222;">Measurement sheets</div>
<div class="t" style="left:346.7px;top:244.0px;font-size:8.6px;letter-spacing:-0.40px;font-weight:700;color:#141414;">Simple text (ASCII)</div>
<div class="t" style="left:347.0px;top:255.9px;font-size:8.6px;letter-spacing:0.03px;color:#202020;">Retractable awning type "little big s"</div>
<div class="t" style="left:347.0px;top:265.3px;font-size:8.6px;letter-spacing:0.08px;color:#202020;">with 4 ft. 11 inch projection</div>
<div class="t" style="left:347.0px;top:274.8px;font-size:8.6px;letter-spacing:-0.16px;color:#202020;">- Fabric: Dickson Style: Dickson</div>
<div class="t" style="left:347.0px;top:284.2px;font-size:8.6px;letter-spacing:-0.25px;color:#202020;">- Valance: Germany</div>
<div class="t" style="left:347.0px;top:293.7px;font-size:8.6px;letter-spacing:-0.08px;color:#202020;">- Frame color: white</div>
<div class="t" style="left:347.0px;top:303.1px;font-size:8.6px;color:#202020;">- Control: gear side: left</div>
<div class="abs" style="left:346px;top:312px;width:200px;height:6.5px;overflow:hidden">
<div class="t" style="left:1.0px;top:0.0px;font-size:8.6px;letter-spacing:0.06px;color:#202020;">- Mounting brackets: wall</div>
</div>
<div class="t" style="left:346.7px;top:326.3px;font-size:8.6px;letter-spacing:-0.37px;font-weight:700;color:#141414;">Formatted text (RTF)</div>
<div class="t" style="left:407.8px;top:342.2px;font-size:9px;letter-spacing:-0.11px;font-weight:700;color:#141414;">Retractable awning type "little big s"</div>
<div class="t" style="left:407.8px;top:353.5px;font-size:9px;letter-spacing:-0.12px;font-weight:700;color:#141414;">with 4 ft. 11 inch projection</div>
<div class="t" style="left:407.8px;top:364.4px;font-size:9px;letter-spacing:-0.10px;color:#2a2a2a;">- Fabric: Dickson Style: Dickson</div>
<div class="t" style="left:407.8px;top:375.2px;font-size:9px;letter-spacing:-0.13px;color:#2a2a2a;">- Valance: Germany</div>
<div class="t" style="left:407.8px;top:386.1px;font-size:9px;letter-spacing:-0.12px;color:#2a2a2a;">- Frame color: white</div>
<div class="t" style="left:407.8px;top:396.9px;font-size:9px;letter-spacing:-0.09px;color:#2a2a2a;">- Control: gear side: left</div>
<div class="t" style="left:407.8px;top:407.8px;font-size:9px;letter-spacing:-0.10px;color:#2a2a2a;">- Mounting brackets: wall</div>
<div class="t" style="left:407.8px;top:418.6px;font-size:9px;letter-spacing:-0.12px;color:#2a2a2a;">- Cranksize 4 ft. 7 inch</div>
<div class="t" style="left:342.6px;top:553.1px;font-size:8.8px;letter-spacing:-0.31px;">Measurement</div>
<div class="t" style="left:413.5px;top:552.3px;font-size:8.8px;letter-spacing:-0.07px;">width: 12 inch - projection: 4 ft. 11 inch</div>
<svg class="abs" style="left:400px;top:448px" width="160" height="80" viewBox="400 448 160 80">
<defs>
<pattern id="st1" width="5.2" height="5.2" patternUnits="userSpaceOnUse" patternTransform="translate(408,467) rotate(34)"><rect width="5.2" height="5.2" fill="#dfe5f7"/><rect width="5.2" height="2.5" fill="#235a70"/></pattern>
<pattern id="st2" width="10.9" height="10.9" patternUnits="userSpaceOnUse" patternTransform="translate(441,507) rotate(45)"><rect width="10.9" height="10.9" fill="#d9def4"/><rect width="10.9" height="5.2" fill="#1d566c"/></pattern>
<linearGradient id="fade" x1="0" y1="0" x2="1" y2="0"><stop offset="0" stop-color="#fff" stop-opacity="0"/><stop offset=".3" stop-color="#fff" stop-opacity=".22"/><stop offset=".65" stop-color="#fff" stop-opacity=".38"/><stop offset="1" stop-color="#fff" stop-opacity=".25"/></linearGradient>
</defs>
<path d="M447.5 452.7H543.5" stroke="#e6e6e8" stroke-width="2.2"/><path d="M449 455.2H541" stroke="#f4f4f5" stroke-width="1.4"/>
<path d="M407.5 467.6L496.3 467L553 499.5L437 502.5L407.5 485.3Z" fill="url(#st1)"/>
<path d="M407.5 467.6L496.3 467L553 499.5L437 502.5L407.5 485.3Z" fill="url(#fade)"/>
<path d="M436.9 506.7H553.5V525.9H452.9Z" fill="url(#st2)"/>
<path d="M436.9 502.5L553.5 499.6V506.8H436.9Z" fill="#f6f7fc"/>
<g fill="none" stroke="#f7f8fc" stroke-width="2.6" stroke-linecap="round"><path d="M406.9 486.2L453.2 525"/><path d="M543.2 452.9L473.8 483.6L516.6 490.5L442.9 509.3"/><path d="M454.9 463.5L518.4 491.3"/></g>
<g fill="none" stroke="#d9dde8" stroke-width=".5"><path d="M542.6 451.6L472.4 482.6"/><path d="M475 484.9L515.4 491.6"/></g>
</svg>
<div class="abs" style="left:705px;top:345px;width:13px;height:181px;background:#fcfcfc"></div>
<div class="abs" style="left:705.3px;top:356.3px;width:10.9px;height:93px;border:1px solid #b4b4b4;border-radius:2px;background:linear-gradient(90deg,#eeeeee 0,#e6e6e6 40%,#cccccc 60%,#c4c4c4 100%)"></div>
<div class="abs" style="left:708.2px;top:400.6px;width:5.4px;height:1px;background:#7a7a7a;box-shadow:0 2px 0 #7a7a7a,0 4px 0 #7a7a7a"></div>
<svg class="abs" style="left:709.3px;top:348.6px" width="5.4" height="3.8" viewBox="0 0 7 5"><path d="M0.5 4L3.5 1L6.5 4Z" fill="#555"/></svg>
<svg class="abs" style="left:709.3px;top:518.1px" width="5.4" height="3.8" viewBox="0 0 7 5"><path d="M0.5 1L3.5 4L6.5 1Z" fill="#444"/></svg>
<div class="abs" style="left:704.7px;top:342px;width:12.6px;height:1.6px;background:#333"></div><div class="abs" style="left:716px;top:340px;width:1.4px;height:3px;background:#333"></div>
<div class="abs" style="left:351px;top:527px;width:354px;height:11.5px;background:#fbfbfb"></div>
<div class="abs" style="left:363.2px;top:527px;width:220.4px;height:10.6px;border:1px solid #b4b4b4;border-radius:2px;background:linear-gradient(#eeeeee 0,#e6e6e6 40%,#cccccc 60%,#c4c4c4 100%)"></div>
<div class="abs" style="left:469.5px;top:530.5px;width:1px;height:5px;background:#8a8a8a;box-shadow:2px 0 0 #8a8a8a,4px 0 0 #8a8a8a"></div>
<svg class="abs" style="left:354.1px;top:530.3px" width="3.8" height="5.4" viewBox="0 0 5 7"><path d="M4 0.5L1 3.5L4 6.5Z" fill="#444"/></svg>
<svg class="abs" style="left:697.6px;top:530.3px" width="3.8" height="5.4" viewBox="0 0 5 7"><path d="M1 0.5L4 3.5L1 6.5Z" fill="#444"/></svg>
<div class="abs" style="left:348.8px;top:526px;width:1.4px;height:12.2px;background:#333"></div><div class="abs" style="left:346.2px;top:536.8px;width:4px;height:1.4px;background:#333"></div>
</body>
</html>
